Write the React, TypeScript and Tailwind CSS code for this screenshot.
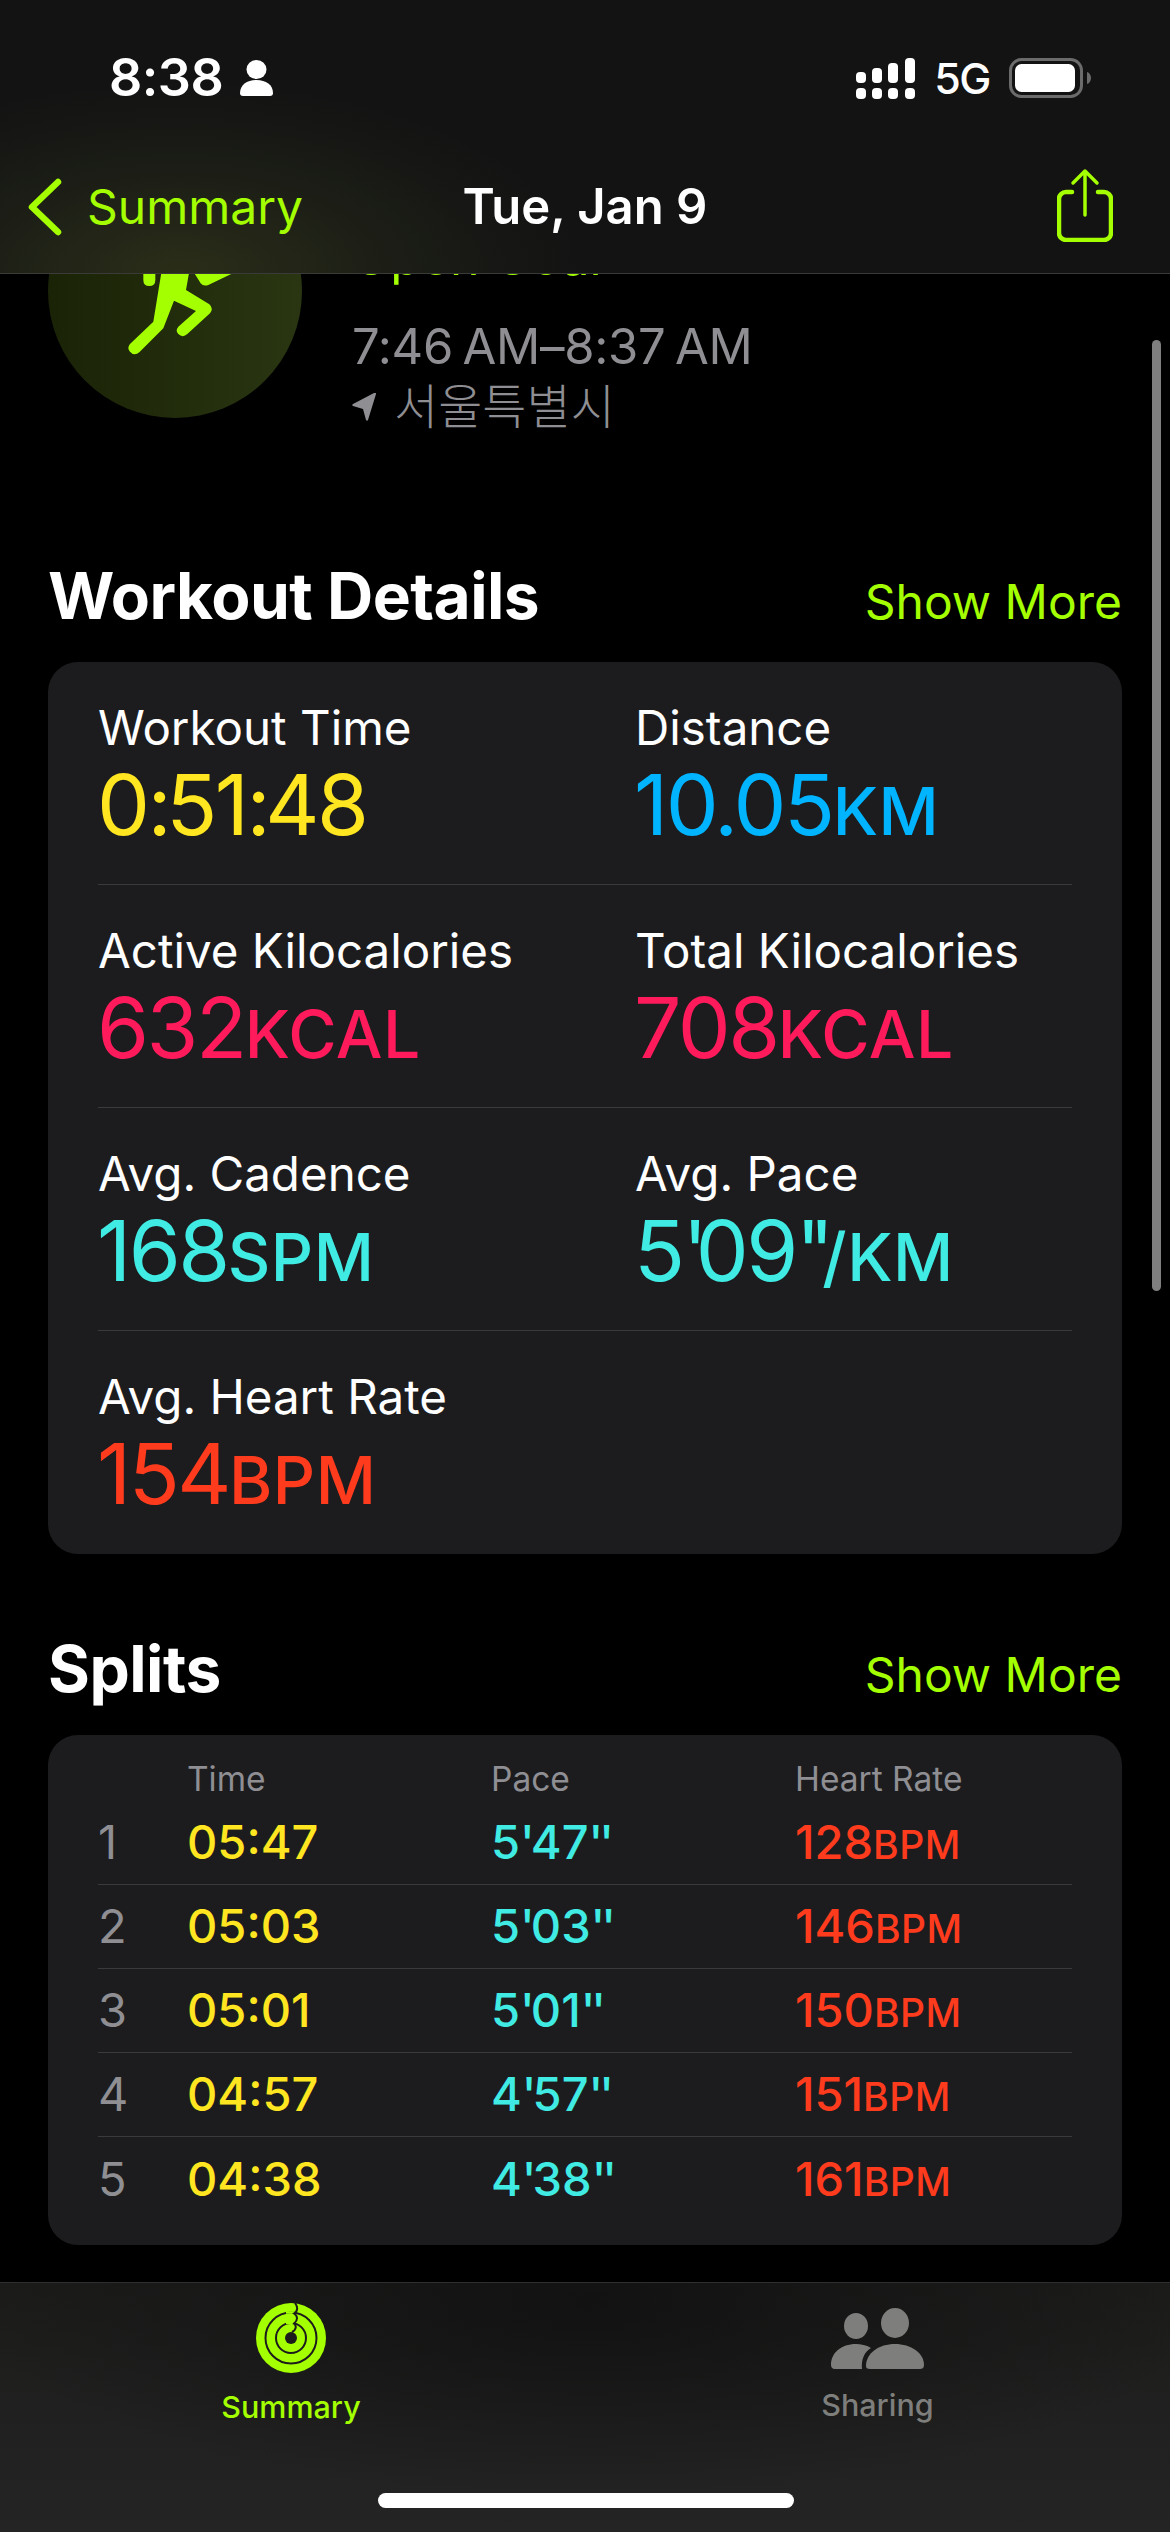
import { Fragment } from "react";

const metrics = [
  [
    { label: "Workout Time", value: "0:51:48", unit: "", color: "text-[#ffe620]" },
    { label: "Distance", value: "10.05", unit: "KM", color: "text-[#00b4ff]" },
  ],
  [
    { label: "Active Kilocalories", value: "632", unit: "KCAL", color: "text-[#ff1a5c]" },
    { label: "Total Kilocalories", value: "708", unit: "KCAL", color: "text-[#ff1a5c]" },
  ],
  [
    { label: "Avg. Cadence", value: "168", unit: "SPM", color: "text-[#40ebe4]" },
    { label: "Avg. Pace", value: "5'09''", unit: "/KM", color: "text-[#40ebe4]" },
  ],
  [{ label: "Avg. Heart Rate", value: "154", unit: "BPM", color: "text-[#ff3b1e]" }],
];

const splits = [
  { n: 1, time: "05:47", pace: "5'47''", hr: "128" },
  { n: 2, time: "05:03", pace: "5'03''", hr: "146" },
  { n: 3, time: "05:01", pace: "5'01''", hr: "150" },
  { n: 4, time: "04:57", pace: "4'57''", hr: "151" },
  { n: 5, time: "04:38", pace: "4'38''", hr: "161" },
];

function SignalIcon() {
  return (
    <svg width="59" height="41" viewBox="0 0 59 41" fill="#fff">
      <rect x="0" y="14" width="10" height="11" rx="4" />
      <rect x="16" y="10" width="10" height="15" rx="4" />
      <rect x="32" y="5" width="10" height="20" rx="4" />
      <rect x="49" y="0" width="10" height="25" rx="4" />
      <rect x="0" y="30" width="10" height="11" rx="4" />
      <rect x="16" y="30" width="10" height="11" rx="4" />
      <rect x="32" y="30" width="10" height="11" rx="4" />
      <rect x="49" y="30" width="10" height="11" rx="4" />
    </svg>
  );
}

function BatteryIcon() {
  return (
    <svg width="82" height="40" viewBox="0 0 82 40">
      <rect x="1.500" y="1.500" width="71" height="37" rx="11" fill="none" stroke="#6b6b6b" strokeWidth="3" />
      <rect x="6" y="6" width="60" height="28" rx="6.500" fill="#fff" />
      <path d="M78 14c2.500.8 4 3 4 6s-1.500 5.200-4 6z" fill="#6b6b6b" />
    </svg>
  );
}

function RunnerIcon() {
  return (
    <svg width="254" height="254" viewBox="0 0 254 254" fill="#a4ff00">
      <g transform="translate(52 96) scale(0.3333)">
        <circle cx="262" cy="-150" r="44" />
        <path d="M205 -90L160 185L90 252Q80 265 90 275Q103 290 118 277L190 205L222 122L288 153L235 200Q225 212 235 222Q248 235 262 222L330 160Q342 145 328 133L258 90L290 -90Z" />
        <path d="M130 -70H166V60Q166 78 148 78Q130 78 130 60Z" />
        <path d="M240 -70L283 40L398 40L325 75Q310 80 302 70L240 -30Z" />
      </g>
    </svg>
  );
}

function TabRings() {
  return (
    <svg width="70" height="70" viewBox="0 0 70 70" fill="none">
      <circle cx="35" cy="35" r="35" fill="#a4ff00" />
      <circle cx="35" cy="35" r="25.500" stroke="#1c1c1c" strokeWidth="2" />
      <circle cx="35" cy="35" r="15" stroke="#1c1c1c" strokeWidth="2" />
      <circle cx="35" cy="35" r="6" fill="#1c1c1c" />
      <path d="M30 9.500H38M30 20H38" stroke="#a4ff00" strokeWidth="2.500" />
      <path d="M39 0C42 4 42 8 38 10.500C42 13 42 17 38 20.500C41 23 40 27 36 29" stroke="#1c1c1c" strokeWidth="2" />
    </svg>
  );
}

function TabPeople() {
  return (
    <svg width="93" height="61" viewBox="0 0 93 61" fill="#7e7f7c">
      <ellipse cx="25" cy="18" rx="12" ry="13" />
      <ellipse cx="64" cy="15" rx="14" ry="15" />
      <path d="M0 57C0 45 10 36 25 36C30 36 35 37 40 40C33 44 30 52 31 61H4C1 61 0 59 0 57Z" />
      <path d="M35 58C35 45 48 36 64 36C80 36 93 45 93 57C93 60 91 61 89 61H39C36 61 35 60 35 58Z" />
    </svg>
  );
}

// the ' and '' marks and colons sit much closer to the digits than Inter sets them
function Pace({ text, quote }: { text: string; quote: string }) {
  return (
    <>
      {text.split("").map((ch, i) => (
        <Fragment key={i}>
          {ch === "'" ? <span className={quote}>'</span> : ch === ":" ? <span className="tracking-[-5.500px]">:</span> : ch}
        </Fragment>
      ))}
    </>
  );
}

function Value({ value, unit, color }: { value: string; unit: string; color: string }) {
  return (
    <div className={`flex items-baseline h-[88px] mt-[5px] leading-[88px] ${color}`}>
      <span className="text-[84px] tracking-[-2.500px] -ml-[1px]">
        <Pace text={value} quote="tracking-[-12px]" />
      </span>
      <span className="text-[66px] font-medium tracking-[0.5px]">{unit}</span>
    </div>
  );
}

function SectionTitle({ title }: { title: string }) {
  return (
    <div className="flex items-baseline justify-between h-[76px]">
      <h2 className="text-[64px] font-bold leading-[76px] tracking-[-0.5px]">{title}</h2>
      <span className="text-[48px] text-[#a4ff00] leading-none">Show More</span>
    </div>
  );
}

export default function App() {
  return (
    <div className="relative flex flex-col w-[1170px] h-[2532px] bg-black text-white overflow-hidden font-['Inter','Noto_Sans_CJK_KR',sans-serif]">
      {/* Status bar + nav */}
      <header className="relative z-10 h-[274px] shrink-0 border-b border-[#3a3b38] bg-[#131313] bg-[radial-gradient(ellipse_400px_190px_at_180px_272px,#2a2e18_0%,#1b1d16_55%,#131313_100%)]">
        <div className="flex items-center justify-between h-[152px] pt-[4px] pl-[109px] pr-[79px]">
          <div className="flex items-center gap-[17px]">
            <span className="text-[52px] font-semibold tracking-[-0.5px] leading-none">8:38</span>
            <svg width="33" height="36" viewBox="0 0 33 36" fill="#fff">
              <ellipse cx="16.500" cy="9.500" rx="10" ry="9.500" />
              <path d="M0 33c0-8 7-13 16.500-13S33 25 33 33c0 2-1 3-3 3H3c-2 0-3-1-3-3z" />
            </svg>
          </div>
          <div className="flex items-center gap-[19px]">
            <SignalIcon />
            <span className="text-[43px] font-medium leading-none tracking-[-1.500px]">5G</span>
            <BatteryIcon />
          </div>
        </div>
        <div className="relative flex items-center justify-between h-[122px] pl-[28px] pr-[57px] pb-[12px]">
          <div className="flex items-center gap-[25px] text-[#a4ff00]">
            <svg width="34" height="58" viewBox="0 0 34 58" fill="none" stroke="#a4ff00" strokeWidth="6.500" strokeLinecap="round" strokeLinejoin="round">
              <path d="M30 4L4 29l26 25" />
            </svg>
            <span className="text-[48px] leading-none">Summary</span>
          </div>
          <span className="absolute left-0 right-0 top-[30px] text-center text-[49px] font-semibold leading-none">Tue, Jan 9</span>
          <svg width="56" height="74" viewBox="0 0 56 74" fill="none" stroke="#a4ff00" strokeLinecap="round" strokeLinejoin="round" className="-mt-[5px]">
            <path d="M15 24H9a7 7 0 0 0-7 7v34a7 7 0 0 0 7 7h38a7 7 0 0 0 7-7V31a7 7 0 0 0-7-7h-6" strokeWidth="4.500" />
            <path d="M28 47V3M16 15L28 3l12 12" strokeWidth="3.500" />
          </svg>
        </div>
      </header>

      {/* Scrolled content */}
      <main className="relative flex-1 overflow-hidden">
        <div className="-mt-[110px] px-[48px]">
          <section className="flex items-start gap-[50px] h-[254px]">
            <div className="w-[254px] h-[254px] shrink-0 rounded-full bg-[linear-gradient(90deg,#1a2306,#2a3612)]">
              <RunnerIcon />
            </div>
            <div className="flex flex-col pt-[63px]">
              <span className="text-[50px] leading-[60px] text-[#a4ff00]">Open Goal</span>
              <span className="mt-[32px] text-[49px] leading-[56px] tracking-[-0.3px] [word-spacing:-4px] text-[#8e8e93] whitespace-nowrap">7:46 AM–8:37 AM</span>
              <div className="flex items-center gap-[17px] mt-[4px] text-[#8e8e93]">
                <svg width="25" height="28" viewBox="0 0 25 28" fill="#8e8e93">
                  <path d="M24 1L16 27c-.5 1-1.500 1-2 0l-3-11L1 13c-1-.3-1-1.500 0-2L22 0c1.500-.500 2.300 0 2 1z" />
                </svg>
                <span className="text-[48px] leading-[56px] font-light">서울특별시</span>
              </div>
            </div>
          </section>

          <section className="mt-[140px]">
            <SectionTitle title="Workout Details" />
            <div className="mt-[28px] rounded-[30px] bg-[#1c1c1e] px-[50px]">
              {metrics.map((row, i) => (
                <div key={i} className={`grid grid-cols-[537px_1fr] h-[223px] pt-[38px] ${i < 3 ? "border-b border-[#3a3a3c]" : ""}`}>
                  {row.map((m) => (
                    <div key={m.label}>
                      <div className="text-[47.500px] leading-[56px]">{m.label}</div>
                      <Value value={m.value} unit={m.unit} color={m.color} />
                    </div>
                  ))}
                </div>
              ))}
            </div>
          </section>

          <section className="mt-[77px]">
            <SectionTitle title="Splits" />
            <div className="mt-[28px] rounded-[30px] bg-[#1c1c1e] px-[50px] pt-[26px] pb-[24px]">
              <div className="grid grid-cols-[89px_304px_304px_1fr] h-[40px] text-[33.500px] leading-[36px] text-[#8e8e93]">
                <span />
                <span>Time</span>
                <span>Pace</span>
                <span>Heart Rate</span>
              </div>
              {splits.map((s, i) => (
                <div key={s.n} className={`grid grid-cols-[89px_304px_304px_1fr] items-center h-[84px] text-[47px] ${i < 4 ? "border-b border-[#3a3a3c]" : ""}`}>
                  <span className="text-[#8e8e93]">{s.n}</span>
                  <span className="text-[#ffe620] font-medium">{s.time}</span>
                  <span className="text-[#40ebe4] font-medium">
                    <Pace text={s.pace} quote="tracking-[-4px]" />
                  </span>
                  <span className="text-[#ff3b1e] font-medium">
                    {s.hr}
                    <span className="text-[39px] tracking-[0.5px]">BPM</span>
                  </span>
                </div>
              ))}
            </div>
          </section>
        </div>
        {/* scroll indicator */}
        <div className="absolute right-[9px] top-[66px] w-[9px] h-[951px] rounded-full bg-[#7f7f7f]" />
      </main>

      {/* Tab bar */}
      <nav className="relative h-[250px] shrink-0 border-t border-[#2f2f2f] bg-[radial-gradient(ellipse_620px_190px_at_590px_20px,#121212_0%,transparent_100%),linear-gradient(180deg,#1b1c1a_0%,#242424_100%)]">
        <div className="grid grid-cols-2 pt-[20px]">
          <div className="flex flex-col items-center mr-[3px] gap-[14px] text-[#a4ff00]">
            <TabRings />
            <span className="text-[30.500px] font-medium leading-[40px]">Summary</span>
          </div>
          <div className="flex flex-col items-center pt-[5px] gap-[16px] text-[#7e7f7c]">
            <TabPeople />
            <span className="text-[30.500px] font-medium leading-[40px]">Sharing</span>
          </div>
        </div>
        <div className="absolute left-[378px] bottom-[24px] w-[416px] h-[15px] rounded-full bg-white" />
      </nav>
    </div>
  );
}
